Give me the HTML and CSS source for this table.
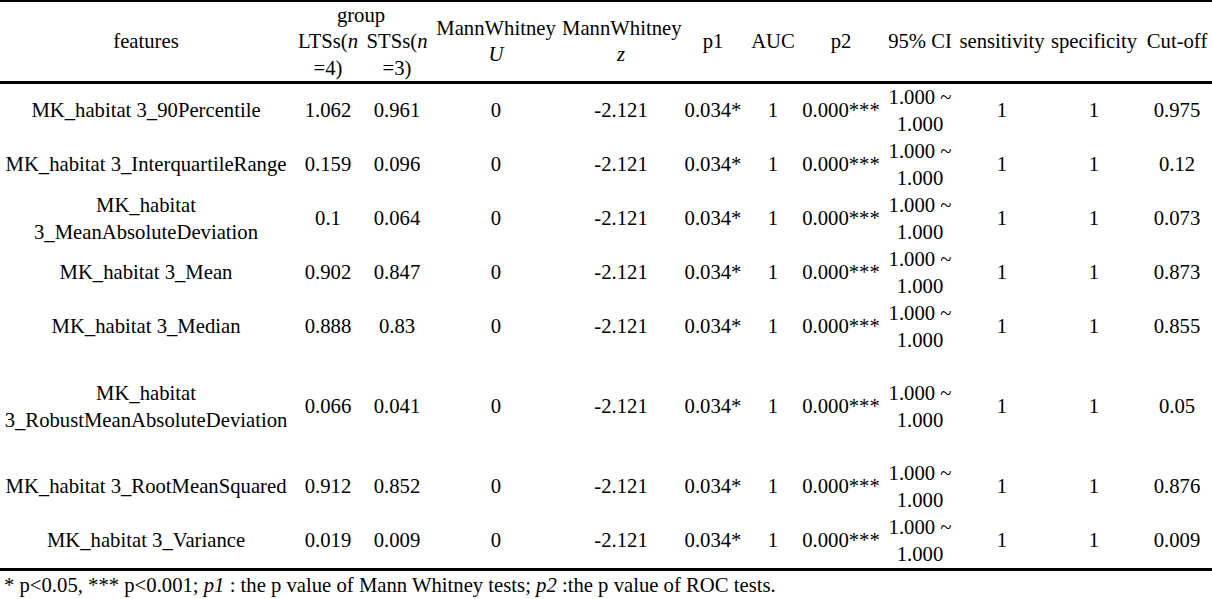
FILE: index.html
```html
<!DOCTYPE html>
<html>
<head>
<meta charset="utf-8">
<link rel="stylesheet" href="styles.css">
</head>
<body>
<table class="stats">
  <colgroup>
    <col class="c-feat"><col class="c-lts"><col class="c-sts"><col class="c-u"><col class="c-z"><col class="c-p1"><col class="c-auc"><col class="c-p2"><col class="c-ci"><col class="c-sens"><col class="c-spec"><col class="c-cut">
  </colgroup>
  <thead>
    <tr>
      <th rowspan="2">features</th>
      <th colspan="2">group</th>
      <th rowspan="2">MannWhitney<br><i>U</i></th>
      <th rowspan="2">MannWhitney<br><i>z</i></th>
      <th rowspan="2">p1</th>
      <th rowspan="2">AUC</th>
      <th rowspan="2">p2</th>
      <th rowspan="2">95% CI</th>
      <th rowspan="2">sensitivity</th>
      <th rowspan="2">specificity</th>
      <th rowspan="2">Cut-off</th>
    </tr>
    <tr>
      <th>LTSs(<i>n</i><br>=4)</th>
      <th>STSs(<i>n</i><br>=3)</th>
    </tr>
  </thead>
  <tbody>
    <tr><td>MK_habitat 3_90Percentile</td><td>1.062</td><td>0.961</td><td>0</td><td>-2.121</td><td>0.034*</td><td>1</td><td>0.000***</td><td>1.000 ~<br>1.000</td><td>1</td><td>1</td><td>0.975</td></tr>
    <tr><td>MK_habitat 3_InterquartileRange</td><td>0.159</td><td>0.096</td><td>0</td><td>-2.121</td><td>0.034*</td><td>1</td><td>0.000***</td><td>1.000 ~<br>1.000</td><td>1</td><td>1</td><td>0.12</td></tr>
    <tr><td>MK_habitat<br>3_MeanAbsoluteDeviation</td><td>0.1</td><td>0.064</td><td>0</td><td>-2.121</td><td>0.034*</td><td>1</td><td>0.000***</td><td>1.000 ~<br>1.000</td><td>1</td><td>1</td><td>0.073</td></tr>
    <tr><td>MK_habitat 3_Mean</td><td>0.902</td><td>0.847</td><td>0</td><td>-2.121</td><td>0.034*</td><td>1</td><td>0.000***</td><td>1.000 ~<br>1.000</td><td>1</td><td>1</td><td>0.873</td></tr>
    <tr><td>MK_habitat 3_Median</td><td>0.888</td><td>0.83</td><td>0</td><td>-2.121</td><td>0.034*</td><td>1</td><td>0.000***</td><td>1.000 ~<br>1.000</td><td>1</td><td>1</td><td>0.855</td></tr>
    <tr class="tall"><td>MK_habitat<br>3_RobustMeanAbsoluteDeviation</td><td>0.066</td><td>0.041</td><td>0</td><td>-2.121</td><td>0.034*</td><td>1</td><td>0.000***</td><td>1.000 ~<br>1.000</td><td>1</td><td>1</td><td>0.05</td></tr>
    <tr><td>MK_habitat 3_RootMeanSquared</td><td>0.912</td><td>0.852</td><td>0</td><td>-2.121</td><td>0.034*</td><td>1</td><td>0.000***</td><td>1.000 ~<br>1.000</td><td>1</td><td>1</td><td>0.876</td></tr>
    <tr><td>MK_habitat 3_Variance</td><td>0.019</td><td>0.009</td><td>0</td><td>-2.121</td><td>0.034*</td><td>1</td><td>0.000***</td><td>1.000 ~<br>1.000</td><td>1</td><td>1</td><td>0.009</td></tr>
  </tbody>
</table>
<p class="note">* p&lt;0.05, *** p&lt;0.001; <i>p1</i> : the p value of Mann Whitney tests; <i>p2</i> :the p value of ROC tests.</p>
</body>
</html>
```

FILE: styles.css
```css
html, body {
  margin: 0;
  padding: 0;
  background: #fff;
}
body {
  font-family: "Liberation Serif", "Times New Roman", serif;
  font-size: 20.7px;
  line-height: 27px;
  color: #000;
}
.stats {
  width: 1212px;
  table-layout: fixed;
  border-collapse: collapse;
  border-top: 2px solid #000;
  border-bottom: 3px solid #000;
}
.c-feat { width: 292px; }
.c-lts { width: 72px; }
.c-sts { width: 66px; }
.c-u { width: 132px; }
.c-z { width: 118px; }
.c-p1 { width: 66px; }
.c-auc { width: 54px; }
.c-p2 { width: 82px; }
.c-ci { width: 76px; }
.c-sens { width: 88px; }
.c-spec { width: 96px; }
.c-cut { width: 70px; }
.stats th,
.stats td {
  padding: 0;
  text-align: center;
  vertical-align: middle;
  font-weight: normal;
  white-space: nowrap;
}
.stats thead {
  border-bottom: 3px solid #000;
}
.stats thead th {
  line-height: 26.33px;
}
.stats tbody tr {
  height: 54px;
}
.stats tbody tr.tall {
  height: 106px;
}
.note {
  margin: 0;
  padding: 1px 0 0 4px;
  line-height: 27px;
}
```
